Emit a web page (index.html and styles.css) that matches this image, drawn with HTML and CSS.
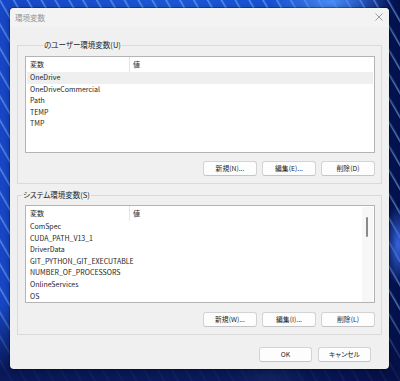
FILE: index.html
```html
<!DOCTYPE html>
<html lang="ja">
<head>
<meta charset="utf-8">
<title>環境変数</title>
<link rel="stylesheet" href="styles.css">
</head>
<body>
<div class="dialog">
  <div class="titlebar">
    <span class="title">環境変数</span>
    <svg class="close" width="8" height="8" viewBox="0 0 8 8"><path d="M0.5 0.5 L7.5 7.5 M7.5 0.5 L0.5 7.5" stroke="#9a9a9a" stroke-width="1" fill="none"/></svg>
  </div>
  <div class="content">
    <fieldset class="group group-user">
      <legend>のユーザー環境変数(U)</legend>
      <div class="list list-user">
        <div class="list-head"><span class="col-name">変数</span><span class="col-value">値</span></div>
        <div class="row selected">OneDrive</div>
        <div class="row">OneDriveCommercial</div>
        <div class="row">Path</div>
        <div class="row">TEMP</div>
        <div class="row">TMP</div>
      </div>
      <div class="buttons">
        <button class="btn">新規(N)...</button>
        <button class="btn">編集(E)...</button>
        <button class="btn">削除(D)</button>
      </div>
    </fieldset>
    <fieldset class="group group-system">
      <legend>システム環境変数(S)</legend>
      <div class="list list-system">
        <div class="list-head"><span class="col-name">変数</span><span class="col-value">値</span></div>
        <div class="row">ComSpec</div>
        <div class="row">CUDA_PATH_V13_1</div>
        <div class="row">DriverData</div>
        <div class="row">GIT_PYTHON_GIT_EXECUTABLE</div>
        <div class="row">NUMBER_OF_PROCESSORS</div>
        <div class="row">OnlineServices</div>
        <div class="row">OS</div>
        <div class="scrollbar"><div class="thumb"></div></div>
      </div>
      <div class="buttons">
        <button class="btn">新規(W)...</button>
        <button class="btn">編集(I)...</button>
        <button class="btn">削除(L)</button>
      </div>
    </fieldset>
    <div class="footer">
      <button class="btn">OK</button>
      <button class="btn">キャンセル</button>
    </div>
  </div>
</div>
</body>
</html>
```

FILE: styles.css
```css
html, body {
  margin: 0;
  padding: 0;
}
body {
  width: 400px;
  height: 381px;
  overflow: hidden;
  font-family: "Noto Sans CJK JP", "Noto Sans", sans-serif;
  font-feature-settings: "palt";
  font-size: 7px;
  color: #242424;
  background:
    linear-gradient(to bottom, rgba(4, 14, 60, 0) 0%, rgba(4, 14, 60, 0) 80%, rgba(6, 16, 70, 0.85) 97%),
    radial-gradient(ellipse 60px 30px at 330px 2px, rgba(80, 150, 255, 0.9), rgba(80, 150, 255, 0)),
    radial-gradient(ellipse 40px 20px at 270px 378px, rgba(90, 160, 255, 0.8), rgba(90, 160, 255, 0)),
    radial-gradient(ellipse 14px 40px at 398px 245px, rgba(60, 110, 240, 0.9), rgba(60, 110, 240, 0)),
    repeating-linear-gradient(60deg, rgba(120, 180, 255, 0) 0px, rgba(120, 180, 255, 0) 9px, rgba(140, 195, 255, 0.55) 10px, rgba(120, 180, 255, 0) 12px),
    linear-gradient(to right, #1747c6 0%, #1c58d6 45%, #1650d2 70%, #0a2a98 88%, #03114a 100%);
}

.dialog {
  margin: 8px 0 0 10px;
  width: 379px;
  height: 361px;
  background: #f0f0f0;
  border-radius: 4px;
  box-shadow: 0 0 0 1px rgba(0, 0, 0, 0.25), 0 2px 8px rgba(0, 0, 0, 0.35);
  overflow: hidden;
  display: flex;
  flex-direction: column;
}

.titlebar {
  height: 19px;
  flex: none;
  background: #f3f3f3;
  display: flex;
  align-items: center;
  justify-content: space-between;
  padding: 0 6px 0 5px;
}
.title {
  color: #939393;
  font-size: 7.5px;
}
.close {
  display: block;
  margin-top: -1px;
}

.content {
  padding: 13px 7px 0 7px;
  display: flex;
  flex-direction: column;
}

.group {
  margin: 0;
  border: 1px solid #dadada;
  padding: 0 6px 7px 7px;
  min-width: 0;
}
.group legend {
  line-height: 10px;
  height: 10px;
  padding: 0 1px;
  font-size: 7.5px;
  color: #242424;
}
.group-user legend {
  margin-left: 18px;
}
.group-system legend {
  margin-left: -3px;
}
.group-system {
  margin-top: 6px;
}

.list {
  margin-top: 6px;
  background: #fff;
  border: 1px solid #b4b4b4;
  overflow: hidden;
  position: relative;
  padding: 0 1px;
}
.list-user {
  height: 95px;
}
.list-system {
  margin-top: 5px;
  height: 96px;
}

.list-head {
  height: 15px;
  display: flex;
  align-items: center;
}
.col-name {
  width: 103px;
  padding-left: 3px;
  height: 15px;
  line-height: 15px;
  border-right: 1px solid #e5e5e5;
  box-sizing: border-box;
}
.col-value {
  padding-left: 3px;
  line-height: 15px;
}

.row {
  height: 11.6px;
  line-height: 11.6px;
  padding-left: 3px;
  white-space: nowrap;
  font-size: 7px;
}
.row.selected {
  background: #efefef;
}

.scrollbar {
  position: absolute;
  top: 1px;
  right: 1px;
  width: 11px;
  bottom: 0;
  background: #f7f7f7;
}
.thumb {
  position: absolute;
  left: 4px;
  top: 10px;
  width: 2px;
  height: 20px;
  border-radius: 1px;
  background: #8a8a8a;
}

.buttons {
  display: flex;
  justify-content: flex-end;
  gap: 5px;
  margin-top: 8px;
}
.group-system .buttons {
  margin-top: 9px;
}

.btn {
  width: 54px;
  height: 15px;
  padding: 0;
  margin: 0;
  font-family: inherit;
  font-feature-settings: "palt";
  font-size: 6.8px;
  color: #242424;
  background: #fdfdfd;
  border: 1px solid #d3d3d3;
  border-bottom-color: #c4c4c4;
  border-radius: 3px;
  line-height: 13px;
}

.footer {
  display: flex;
  justify-content: flex-end;
  gap: 6px;
  margin-top: 12px;
  padding-right: 11px;
}
.footer .btn {
  width: 53px;
}
```
